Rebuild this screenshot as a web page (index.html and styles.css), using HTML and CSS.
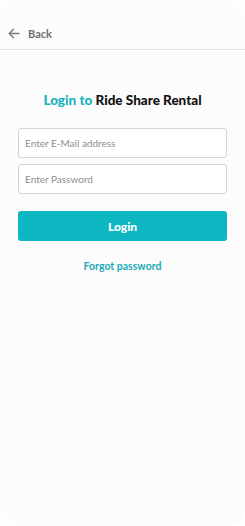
FILE: index.html
```html
<!DOCTYPE html>
<html>
<head>
	<title>Login</title>
	<link rel="stylesheet" href="styles.css">
</head>
<body>
	<div class="screen">
		<div class="topbar">
			<a class="back" href="#">
				<svg width="12" height="11" viewBox="0 0 12 11"><path d="M11 5.5H1.5M5.5 1.2L1.2 5.5l4.3 4.3" fill="none" stroke="#777" stroke-width="1.3" stroke-linecap="round" stroke-linejoin="round"/></svg>
				<span>Back</span>
			</a>
		</div>

		<div class="login-box">
			<h1><span class="accent">Login to</span> Ride Share Rental</h1>

			<form class="login-form">
				<input type="text" placeholder="Enter E-Mail address">
				<input type="password" placeholder="Enter Password">
				<button type="submit">Login</button>
			</form>

			<a class="forgot" href="#">Forgot password</a>
		</div>
	</div>
</body>
</html>
```

FILE: styles.css
```css
body {
	margin: 0;
	background: #fff;
	font-family: Lato, "Noto Sans", sans-serif;
}

.screen {
	height: 526px;
	background: #fcfcfc;
	border-radius: 16px;
	box-sizing: border-box;
}

.topbar {
	height: 49px;
	border-bottom: 1px solid #e2e2e2;
	display: flex;
	align-items: flex-end;
	padding: 0 0 9px 8px;
	box-sizing: border-box;
	height: 50px;
}

.back {
	display: flex;
	align-items: center;
	gap: 8px;
	color: #6e6e6e;
	text-decoration: none;
	font-size: 11px;
	font-weight: bold;
}

.login-box {
	padding: 0 18px;
	text-align: center;
}

.login-box h1 {
	margin: 42px 0 20px;
	font-size: 13.5px;
	font-weight: 900;
	color: #111;
}

.accent {
	color: #1ab2bf;
}

.login-form {
	display: flex;
	flex-direction: column;
}

.login-form input {
	height: 30px;
	box-sizing: border-box;
	border: 1px solid #d3d3d3;
	border-radius: 3px;
	background: #fff;
	padding: 0 6px;
	font-family: Lato, "Noto Sans", sans-serif;
	font-size: 10px;
	margin-bottom: 6px;
}

.login-form input::placeholder {
	color: #8d8d8d;
}

.login-form button {
	margin-top: 11px;
	height: 30px;
	border: none;
	border-radius: 3px;
	background: #0db7c1;
	color: #fff;
	font-family: Lato, "Noto Sans", sans-serif;
	font-size: 12px;
	font-weight: 900;
}

.forgot {
	display: block;
	margin-top: 19px;
	color: #1aa9b8;
	text-decoration: none;
	font-size: 10.5px;
	font-weight: bold;
}
```
